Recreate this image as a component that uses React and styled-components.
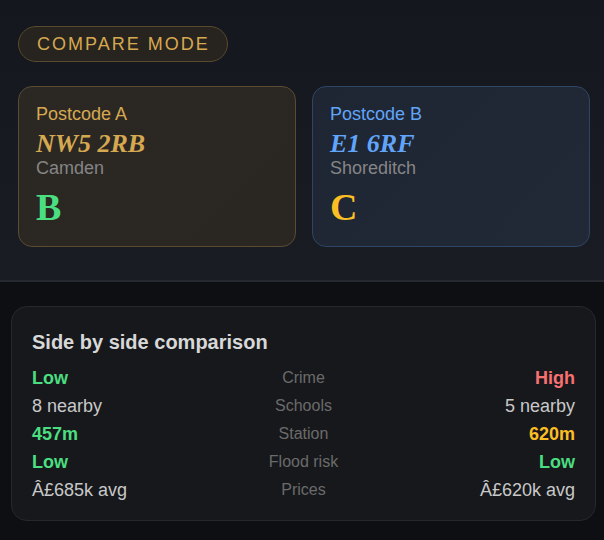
import React from 'react';
import styled, {createGlobalStyle} from "styled-components";

const GlobalStyle = createGlobalStyle`
  html, body {
    margin: 0;
    padding: 0;
    background: #0e0f13;
  }
  body {
    font-family: "Liberation Sans", Arial, sans-serif;
  }
`

const Page = styled.div`
  width: 604px;
  height: 540px;
  background: #0e0f13;
  overflow: hidden;
`

const Top = styled.div`
  background: linear-gradient(180deg, #14171d 0%, #191c22 100%);
  border-bottom: 2px solid #26292f;
  padding: 26px 14px 33px 18px;
`

const Badge = styled.div`
  display: inline-block;
  padding: 7px 17px 6px 18px;
  border: 1px solid #5a4a2d;
  border-radius: 999px;
  background: #27241f;
  color: #d6a850;
  font-size: 18px;
  line-height: 21px;
  letter-spacing: 2px;
`

const Cards = styled.div`
  display: grid;
  grid-template-columns: 1fr 1fr;
  gap: 16px;
  margin-top: 24px;
`

const Card = styled.div`
  border: 1px solid ${p => p.$border};
  background: ${p => p.$bg};
  border-radius: 14px;
  padding: 16px 16px 19px 17px;
  display: flex;
  flex-direction: column;
`

const Label = styled.div`
  font-size: 18px;
  line-height: 22px;
  color: ${p => p.$color};
`

const Code = styled.div`
  margin-top: 6px;
  font-family: "Liberation Serif", "Times New Roman", serif;
  font-style: italic;
  font-weight: 700;
  font-size: 26px;
  line-height: 26px;
  color: ${p => p.$color};
`

const Area = styled.div`
  font-size: 18px;
  line-height: 22px;
  color: #858585;
`

const Grade = styled.div`
  margin-top: 8px;
  font-family: "Liberation Serif", "Times New Roman", serif;
  font-weight: 700;
  font-size: 38px;
  line-height: 40px;
  color: ${p => p.$color};
`

const Bottom = styled.div`
  padding: 24px 8px 0 11px;
`

const Panel = styled.div`
  border: 1px solid #26282d;
  background: #17181c;
  border-radius: 16px;
  padding: 21px 20px 16px;
`

const Title = styled.div`
  font-size: 20px;
  font-weight: 700;
  line-height: 28px;
  color: #d8d8d8;
  margin-bottom: 8px;
`

const Row = styled.div`
  display: grid;
  grid-template-columns: 1fr auto 1fr;
  align-items: center;
  height: 28px;
`

const Value = styled.div`
  font-size: 18px;
  line-height: 28px;
  font-weight: ${p => p.$bold ? 700 : 400};
  color: ${p => p.$color || "#c8c8c8"};
  text-align: ${p => p.$right ? "right" : "left"};
`

const Metric = styled.div`
  font-size: 16px;
  line-height: 28px;
  color: #6b6b6b;
  text-align: center;
`

const GREEN = "#4ade80";
const RED = "#f87171";
const YELLOW = "#fbbf24";

const rows = [
    {label: "Crime", a: "Low", aColor: GREEN, b: "High", bColor: RED},
    {label: "Schools", a: "8 nearby", b: "5 nearby"},
    {label: "Station", a: "457m", aColor: GREEN, b: "620m", bColor: YELLOW},
    {label: "Flood risk", a: "Low", aColor: GREEN, b: "Low", bColor: GREEN},
    {label: "Prices", a: "Â£685k avg", b: "Â£620k avg"},
];

const App = () => {
    return (
        <Page>
            <GlobalStyle/>
            <Top>
                <Badge>COMPARE MODE</Badge>
                <Cards>
                    <Card $bg="linear-gradient(135deg, #2b2824 0%, #2a2723 100%)" $border="#5a4b31">
                        <Label $color="#d6a850">Postcode A</Label>
                        <Code $color="#d6a850">NW5 2RB</Code>
                        <Area>Camden</Area>
                        <Grade $color={GREEN}>B</Grade>
                    </Card>
                    <Card $bg="linear-gradient(135deg, #1f2633 0%, #212836 100%)" $border="#2f4566">
                        <Label $color="#60a5fa">Postcode B</Label>
                        <Code $color="#60a5fa">E1 6RF</Code>
                        <Area>Shoreditch</Area>
                        <Grade $color={YELLOW}>C</Grade>
                    </Card>
                </Cards>
            </Top>
            <Bottom>
                <Panel>
                    <Title>Side by side comparison</Title>
                    {rows.map(r => (
                        <Row key={r.label}>
                            <Value $bold={!!r.aColor} $color={r.aColor}>{r.a}</Value>
                            <Metric>{r.label}</Metric>
                            <Value $right $bold={!!r.bColor} $color={r.bColor}>{r.b}</Value>
                        </Row>
                    ))}
                </Panel>
            </Bottom>
        </Page>
    );
};

export default App;
